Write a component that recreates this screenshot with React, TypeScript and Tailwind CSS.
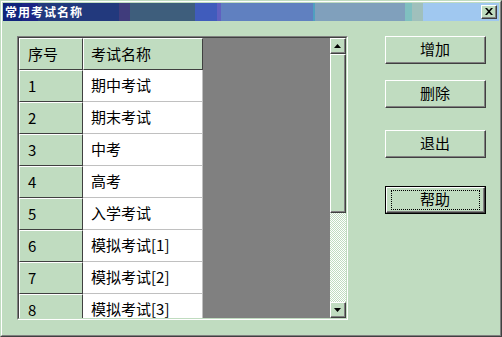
import React from 'react';

const rows = [
  { no: '1', name: '期中考试' },
  { no: '2', name: '期末考试' },
  { no: '3', name: '中考' },
  { no: '4', name: '高考' },
  { no: '5', name: '入学考试' },
  { no: '6', name: '模拟考试[1]' },
  { no: '7', name: '模拟考试[2]' },
  { no: '8', name: '模拟考试[3]' },
];

const font = 'font-["Noto_Sans_CJK_SC",sans-serif]';

/** Raised 3D box, win9x style */
function Raised({ className = '', children }: { className?: string; children?: React.ReactNode }) {
  return (
    <div className={`border border-t-white border-l-white border-r-[#404040] border-b-[#404040] bg-[#c0dcc0] ${className}`}>
      <div className="flex h-full w-full items-center justify-center border-r border-b border-[#808080]">
        {children}
      </div>
    </div>
  );
}

function Arrow({ down = false }: { down?: boolean }) {
  return (
    <svg width="7" height="4" viewBox="0 0 7 4">
      <path d={down ? 'M0 0H7L3.5 4Z' : 'M3.5 0L7 4H0Z'} fill="#000" />
    </svg>
  );
}

function DialogButton({ label, isDefault = false }: { label: string; isDefault?: boolean }) {
  if (isDefault) {
    return (
      <div className="h-[28px] w-[101px] border border-black">
        <Raised className="h-full w-full">
          <div className="flex h-[20px] w-[89px] items-center justify-center border border-dotted border-black text-[15px] text-black">
            {label}
          </div>
        </Raised>
      </div>
    );
  }
  return (
    <Raised className="h-[28px] w-[101px]">
      <span className="text-[15px] text-black">{label}</span>
    </Raised>
  );
}

export default function App() {
  return (
    <div className={`h-[337px] w-[502px] border border-t-[#c0dcc0] border-l-[#c0dcc0] border-r-[#404040] border-b-[#404040] ${font}`}>
      <div className="flex h-full flex-col border border-t-white border-l-white border-r-[#808080] border-b-[#808080] bg-[#c0dcc0] p-px">
        {/* ── Title bar ─────────────────────────────────── */}
        <div className="flex h-[18px] items-center justify-between bg-[linear-gradient(to_right,#10247c_0px,#10247c_19px,#1c2484_19px,#1c2484_35px,#22397d_35px,#22397d_116px,#403c7c_116px,#403c7c_127px,#3e5e7c_127px,#3e5e7c_192px,#405cbc_192px,#405cbc_214px,#6060c0_214px,#6060c0_218px,#6080c0_218px,#6080c0_310px,#50a0c0_310px,#50a0c0_312px,#80a0bc_312px,#80a0bc_402px,#80c0c0_402px,#80c0c0_409px,#a0c0bc_409px,#a0c0bc_420px,#a0c8f0_420px)] pl-[2px] pr-[2px]">
          <span className="text-[12px] leading-none font-bold tracking-[1px] text-white">常用考试名称</span>
          <Raised className="h-[14px] w-[16px]">
            <svg width="8" height="7" viewBox="0 0 8 7">
              <path d="M0 0H2L4 2.2L6 0H8L5 3.5L8 7H6L4 4.8L2 7H0L3 3.5Z" fill="#000" />
            </svg>
          </Raised>
        </div>

        {/* ── Body ──────────────────────────────────────── */}
        <div className="flex flex-1 pt-[15px] pl-[14px]">
          {/* Grid */}
          <div className="h-[284px] w-[331px] border border-t-[#808080] border-l-[#808080] border-r-white border-b-white">
            <div className="flex h-full w-full border border-t-[#404040] border-l-[#404040] border-r-[#c0dcc0] border-b-[#c0dcc0]">
              <div className="flex-1 overflow-hidden bg-[#808080]">
                <div className="flex h-[32px]">
                  <div className="flex w-[64px] items-center border border-t-white border-l-white border-r-[#404040] border-b-[#404040] bg-[#c0dcc0] pl-[8px] text-[15px] text-black">
                    序号
                  </div>
                  <div className="flex w-[120px] items-center border border-t-white border-l-white border-r-[#404040] border-b-[#404040] bg-[#c0dcc0] pl-[7px] text-[15px] text-black">
                    考试名称
                  </div>
                </div>
                {rows.map((row) => (
                  <div key={row.no} className="flex h-[32px]">
                    <div className="flex w-[64px] items-center border border-t-white border-l-white border-r-[#404040] border-b-[#404040] bg-[#c0dcc0] pl-[8px] text-[15px] text-black">
                      {row.no}
                    </div>
                    <div className="flex w-[120px] items-center border-r border-b border-[#c0c0c0] bg-white pl-[8px] text-[15px] text-black">
                      {row.name}
                    </div>
                  </div>
                ))}
              </div>

              {/* Scrollbar */}
              <div className="flex w-[16px] flex-col">
                <Raised className="h-[16px] w-[16px]">
                  <Arrow />
                </Raised>
                <Raised className="h-[159px] w-[16px]" />
                <div className="flex-1 bg-[repeating-conic-gradient(#c0dcc0_0_25%,#ffffff_0_50%)] bg-[length:2px_2px]" />
                <Raised className="h-[16px] w-[16px]">
                  <Arrow down />
                </Raised>
              </div>
            </div>
          </div>

          {/* Buttons */}
          <div className="ml-[37px] flex flex-col">
            <DialogButton label="增加" />
            <div className="mt-[16px]">
              <DialogButton label="删除" />
            </div>
            <div className="mt-[22px]">
              <DialogButton label="退出" />
            </div>
            <div className="mt-[28px]">
              <DialogButton label="帮助" isDefault />
            </div>
          </div>
        </div>
      </div>
    </div>
  );
}
